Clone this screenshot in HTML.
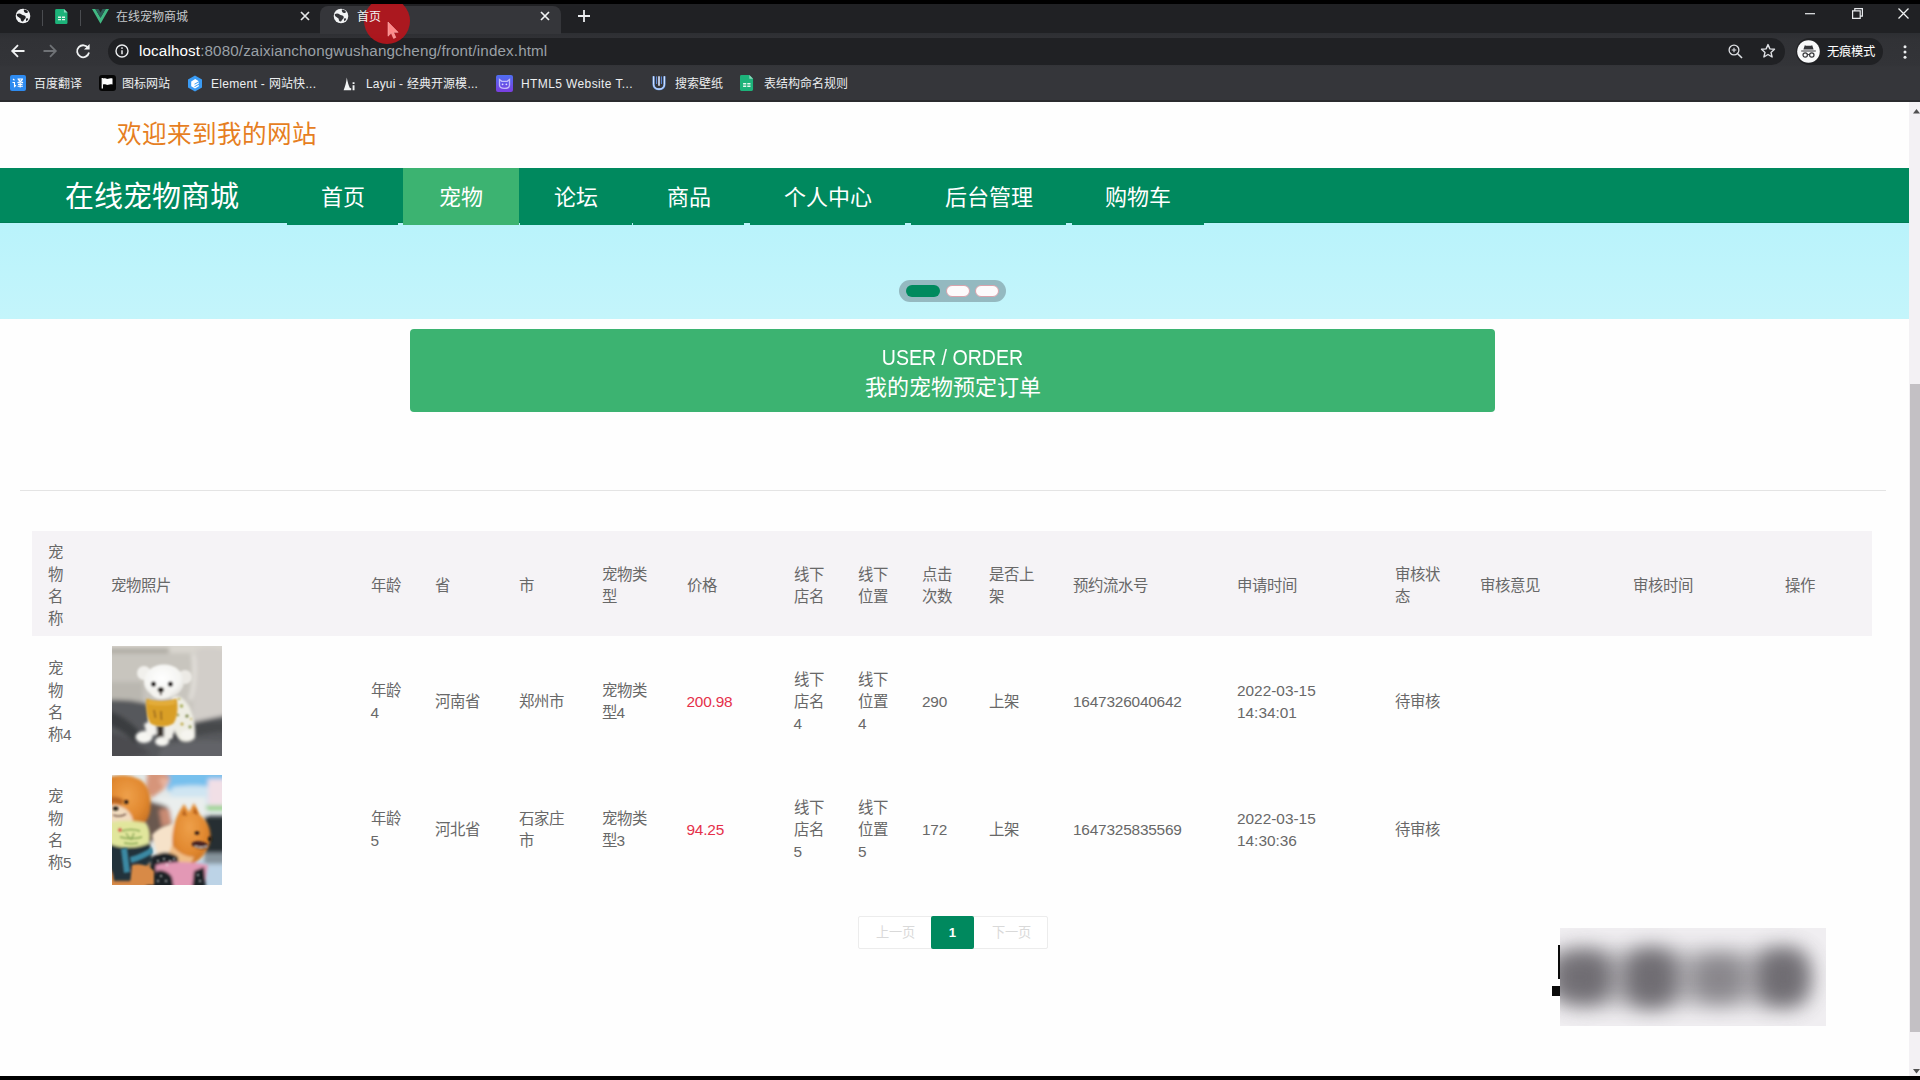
<!DOCTYPE html>
<html lang="zh-CN">
<head>
<meta charset="utf-8">
<title>首页</title>
<style>
*{margin:0;padding:0;box-sizing:border-box}
html,body{width:1920px;height:1080px;overflow:hidden;background:#000;font-family:"Liberation Sans",sans-serif}
.a{position:absolute}
svg{display:block;position:absolute;overflow:visible}
/* ---------- browser chrome ---------- */
#tabstrip{left:0;top:4px;width:1920px;height:30px;background:#202124}
#toolbar{left:0;top:33px;width:1920px;height:68px;background:linear-gradient(#2d2f33 0,#313236 6px,#333438 32px,#35363a 34px)}
#chromeline{left:0;top:100px;width:1920px;height:2px;background:#2a2b2e}
.tabtxt{top:10.300px;font-size:12px;line-height:15px;white-space:nowrap}
#acttab{left:320px;top:6px;width:241px;height:28px;background:#35363a;border-radius:8px 8px 0 0}
#omni{left:108px;top:38px;width:1677px;height:27px;border-radius:14px;background:#202124}
#url{left:139px;top:42px;font-size:15.200px;line-height:18px;color:#9aa0a6;white-space:nowrap;letter-spacing:.13px}
#url b{font-weight:normal;color:#fff}
#incog{left:1796px;top:38px;width:87px;height:27px;border-radius:14px;background:#202124}
.bm{top:76.800px;font-size:12px;line-height:15px;color:#eceef0;white-space:nowrap}
/* ---------- page ---------- */
#page{left:0;top:102px;width:1909px;height:974px;background:#fefefe;overflow:hidden}
#welcome{left:117px;top:18.300px;font-size:24.600px;line-height:30px;color:#e67e22;white-space:nowrap}
#nav{left:0;top:66.200px;width:1909px;height:54.400px;background:#00895e;box-shadow:inset 0 -1px 0 #007d55}
#brand{left:65px;top:77px;font-size:29px;line-height:36px;color:#fff;white-space:nowrap}
.ni{top:66.200px;height:56.500px;background:#00895e;color:#fff;font-size:22px;line-height:59.600px;text-align:center;white-space:nowrap}
.ni.on{background:#3cb371}
#carousel{left:0;top:121px;width:1909px;height:96px;background:linear-gradient(#b9f3fb,#c4f5fb)}
#indic{left:899px;top:178.200px;width:107px;height:22px;border-radius:11px;background:rgba(70,80,90,.36)}
#banner{left:410px;top:227.400px;width:1085px;height:82.500px;border-radius:4px;background:#3cb371;color:#fff;text-align:center;white-space:nowrap}
#banner div{left:0;width:1085px;font-size:22px;line-height:30px}
#hr{left:20px;top:388px;width:1866px;height:1px;background:#e4e4e4}
#thead{left:32px;top:429px;width:1840px;height:104.600px;background:#f5f3f6}
.c{font-size:15.400px;line-height:22px;color:#686868;white-space:nowrap;transform:translateY(-50%)}
.c.r{color:#e5304a}
.n{letter-spacing:-.2px}
#pager{left:858px;top:814px;width:190px;height:33px;border:1px solid #ececec;border-radius:2px;background:#fff}
#pager .pt{top:8px;font-size:13.200px;line-height:15px;color:#d9d9d9;white-space:nowrap}
#pcur{left:931px;top:814px;width:43px;height:33px;border-radius:2px;background:#00895e;color:#fff;font-size:13.200px;font-weight:bold;line-height:33.500px;text-align:center}
#wm{left:1560px;top:826px;width:266px;height:98px;background:#f0eef1;overflow:hidden}
#wm i{position:absolute;display:block;background:#615e64;border-radius:36%;filter:blur(10px);opacity:.8}
#sb{left:1909px;top:102px;width:11px;height:974px;background:#f3f1f4}
#sbthumb{left:1910px;top:384px;width:10px;height:648px;background:#c3c0c4}
</style>
</head>
<body>
<!-- ======== browser chrome ======== -->
<div class="a" id="tabstrip"></div>
<div class="a" id="toolbar"></div>
<div class="a" id="chromeline"></div>
<div class="a" id="acttab"></div>
<!-- pinned tab 1 : globe -->
<svg style="left:15px;top:8px" width="16" height="16" viewBox="0 0 16 16"><circle cx="8" cy="8" r="7.3" fill="#f1f3f4"/><path d="M1.700 6.300c1.800-1.300 3.700-1 5 .3 1 1 2.500.5 3.500 1.400 1 .9.600 2.500-.500 3.200-.9.600-1 2-2.100 2.300-1.100.3-1.800-.9-1.800-1.900 0-1-.9-1.400-1.700-2-.9-.7-2.200-1-2.400-3.300zM9 1.600c1.400-.1 3 .8 3.800 2 .5.800-.3 1.500-1.200 1.400-.9-.1-1.800-.4-2.300-1.100-.4-.6-.7-1.500-.3-2.300zM11.300 10.600c.8-.5 1.700-.3 2 .3-.4 1-1 1.800-1.800 2.400-.6-.8-.8-2.100-.2-2.700z" fill="#202124"/></svg>
<div class="a" style="left:42px;top:10px;width:1px;height:16px;background:#4a4c50"></div>
<!-- pinned tab 2 : sheet -->
<svg style="left:54.500px;top:8.500px" width="13.500" height="15" viewBox="0 0 15 17"><path d="M1.5 0h8.500l4 4v11.500a1.500 1.500 0 0 1-1.500 1.500h-11a1.500 1.500 0 0 1-1.500-1.500v-14a1.500 1.500 0 0 1 1.500-1.500z" fill="#1db37a"/><path d="M10 0l4 4h-4z" fill="#8ed9bd"/><path d="M3.300 8.500h3.400v1.600h-3.400zM7.800 8.500h3.400v1.600h-3.400zM3.300 11.200h3.400v1.600h-3.400zM7.800 11.200h3.400v1.600h-3.400z" fill="#e7f6ee"/></svg>
<div class="a" style="left:80px;top:10px;width:1px;height:16px;background:#4a4c50"></div>
<!-- tab 3 : vue -->
<svg style="left:92px;top:9px" width="17" height="15" viewBox="0 0 17 15"><path d="M0 0h3.400l5.100 8.800 5.100-8.800h3.400l-8.500 14.700z" fill="#41b883"/><path d="M3.400 0h3.100l2 3.500 2-3.500h3.100l-5.100 8.800z" fill="#2c5a55"/></svg>
<div class="a tabtxt" style="left:116px;color:#c6c9cc">在线宠物商城</div>
<svg style="left:300px;top:11px" width="10" height="10" viewBox="0 0 10 10"><path d="M1 1l8 8M9 1l-8 8" stroke="#e4e6e8" stroke-width="1.700" fill="none"/></svg>
<!-- active tab -->
<svg style="left:333px;top:8px" width="16" height="16" viewBox="0 0 16 16"><circle cx="8" cy="8" r="7.300" fill="#f1f3f4"/><path d="M1.700 6.300c1.800-1.300 3.700-1 5 .3 1 1 2.500.5 3.500 1.400 1 .9.600 2.500-.500 3.200-.9.600-1 2-2.100 2.300-1.100.3-1.800-.9-1.800-1.900 0-1-.9-1.400-1.700-2-.9-.7-2.200-1-2.400-3.300zM9 1.600c1.400-.1 3 .8 3.800 2 .5.800-.3 1.500-1.200 1.400-.9-.1-1.800-.4-2.300-1.100-.4-.6-.7-1.500-.3-2.300zM11.300 10.600c.8-.5 1.700-.3 2 .3-.4 1-1 1.800-1.800 2.400-.6-.8-.8-2.100-.2-2.700z" fill="#35363a"/></svg>
<svg style="left:540px;top:11px" width="10" height="10" viewBox="0 0 10 10"><path d="M1 1l8 8M9 1l-8 8" stroke="#f1f3f4" stroke-width="1.700" fill="none"/></svg>
<!-- new tab + -->
<svg style="left:578px;top:10px" width="12" height="12" viewBox="0 0 12 12"><path d="M6 0v12M0 6h12" stroke="#eceef0" stroke-width="1.800" fill="none"/></svg>
<!-- window controls -->
<svg style="left:1805px;top:13px" width="10" height="2" viewBox="0 0 10 2"><path d="M0 .7h10" stroke="#e8eaed" stroke-width="1.200"/></svg>
<svg style="left:1852px;top:8px" width="11" height="11" viewBox="0 0 11 11"><path d="M.6 2.800h7.600v7.600h-7.600zM2.800 2.800v-2.200h7.600v7.600h-2.200" stroke="#e8eaed" stroke-width="1.200" fill="none"/></svg>
<svg style="left:1898px;top:8px" width="11" height="11" viewBox="0 0 11 11"><path d="M.5.5l10 10M10.500.5l-10 10" stroke="#f1f3f4" stroke-width="1.300" fill="none"/></svg>
<!-- toolbar buttons -->
<svg style="left:11px;top:44px" width="14" height="14" viewBox="0 0 14 14"><path d="M13.500 7h-12M7 1.200l-5.800 5.800 5.800 5.800" stroke="#f1f3f4" stroke-width="1.800" fill="none"/></svg>
<svg style="left:43px;top:44px" width="14" height="14" viewBox="0 0 14 14"><path d="M.5 7h12M7 1.200l5.800 5.800-5.800 5.800" stroke="#6f7276" stroke-width="1.800" fill="none"/></svg>
<svg style="left:75px;top:43px" width="16" height="16" viewBox="0 0 16 16"><path d="M13.300 5.200a6 6 0 1 0 .7 4.300" stroke="#f1f3f4" stroke-width="1.800" fill="none"/><path d="M14.600 1v5.600h-5.600z" fill="#f1f3f4"/></svg>
<div class="a" id="omni"></div>
<svg style="left:115px;top:44px" width="14" height="14" viewBox="0 0 14 14"><circle cx="7" cy="7" r="6" stroke="#eceef0" stroke-width="1.400" fill="none"/><path d="M7 6.200v4" stroke="#eceef0" stroke-width="1.500"/><circle cx="7" cy="4.100" r=".9" fill="#eceef0"/></svg>
<div class="a" id="url"><b>localhost</b>:8080/zaixianchongwushangcheng/front/index.html</div>
<svg style="left:1728px;top:44px" width="15" height="15" viewBox="0 0 15 15"><circle cx="6" cy="6" r="4.900" stroke="#dfe1e5" stroke-width="1.300" fill="none"/><path d="M9.700 9.700l4.300 4.300" stroke="#dfe1e5" stroke-width="1.600"/><path d="M6 3.700v4.600M3.700 6h4.600" stroke="#dfe1e5" stroke-width="1.100"/></svg>
<svg style="left:1760px;top:43px" width="16" height="16" viewBox="0 0 16 16"><path d="M8 1.600l1.900 4.300 4.600.4-3.500 3.100 1.100 4.600-4.100-2.500-4.100 2.500 1.100-4.600-3.500-3.100 4.600-.4z" stroke="#dfe1e5" stroke-width="1.400" fill="none" stroke-linejoin="round"/></svg>
<div class="a" id="incog"></div>
<svg style="left:1797px;top:40px" width="23" height="23" viewBox="0 0 23 23"><circle cx="11.500" cy="11.500" r="11.300" fill="#f8f9fa"/><path d="M7.800 5.200l1.300.6h4.800l1.300-.6 1.400 4.200h-10.200z" fill="#35363a"/><path d="M4.200 10.400h14.600v1.200h-14.600z" fill="#35363a"/><circle cx="8.200" cy="15" r="2.200" stroke="#35363a" stroke-width="1.200" fill="none"/><circle cx="14.800" cy="15" r="2.200" stroke="#35363a" stroke-width="1.200" fill="none"/><path d="M10.300 14.600h2.400" stroke="#35363a" stroke-width="1"/></svg>
<div class="a" style="left:1827px;top:45.300px;font-size:12.300px;line-height:15px;color:#fff;white-space:nowrap">无痕模式</div>
<svg style="left:1903px;top:45px" width="4" height="14" viewBox="0 0 4 14"><circle cx="2" cy="1.700" r="1.500" fill="#eceef0"/><circle cx="2" cy="7" r="1.500" fill="#eceef0"/><circle cx="2" cy="12.300" r="1.500" fill="#eceef0"/></svg>
<!-- bookmarks bar -->
<svg style="left:10px;top:75px" width="16" height="16" viewBox="0 0 16 16"><rect width="16" height="16" rx="2" fill="#2e8bf0"/><path d="M3 4l1.500 1.200M2.500 7.500h2v4l1.500-1.200M7.500 4h5.500M8.300 4c.8 2 2.600 3.200 4.800 3.600M12.500 4c-.8 2-2.600 3.200-5 3.600M10.200 7.600v5M8 9.400h4.500M7.600 11.300h5.300" stroke="#fff" stroke-width="1.100" fill="none"/></svg>
<div class="a bm" style="left:34px">百度翻译</div>
<svg style="left:99px;top:75px" width="17" height="16" viewBox="0 0 17 16"><rect width="17" height="16" rx="3" fill="#060606"/><path d="M3.300 3v10.500" stroke="#fff" stroke-width="1.300"/><path d="M4 3.600c2-1.200 3.500.9 5.200.2 1.300-.5 2.600-1.100 4.300-.2v6c-1.700-.9-3-.3-4.300.2-1.700.7-3.200-1.400-5.200-.2z" fill="#fff"/></svg>
<div class="a bm" style="left:122px">图标网站</div>
<svg style="left:187px;top:75px" width="16" height="17" viewBox="0 0 16 17"><path d="M8 .4l7 4v8.200l-7 4-7-4v-8.200z" fill="#3a9bf4"/><path d="M4.200 6.400l4-2.300 3.600 2.100-4.300 2.500v1.100l4.300-2.500v1.400l-4.300 2.500v1.100l4.300-2.500v1.500l-3.800 2.200-3.800-2.200z" fill="#fff"/></svg>
<div class="a bm" style="left:211px;letter-spacing:.29px">Element - 网站快...</div>
<svg style="left:343px;top:76.500px" width="14" height="14" viewBox="0 0 14 14"><path d="M.6 13.200c1.600-3.600 2.700-7.800 3.200-12.600.7 4.200 1.700 7.600 3.100 10.400l1.300.2v2z" fill="#f1f3f4"/><path d="M9.600 13.200v-5h1.900v5zM9.600 5.300h1.900v1.700h-1.900z" fill="#f1f3f4"/></svg>
<div class="a bm" style="left:366px;letter-spacing:.17px">Layui - 经典开源模...</div>
<svg style="left:496px;top:75px" width="17" height="17" viewBox="0 0 17 17"><defs><linearGradient id="hg5" x1="0" y1="0" x2="0" y2="1"><stop offset="0" stop-color="#4f6ef2"/><stop offset="1" stop-color="#7a3ee0"/></linearGradient></defs><rect width="17" height="17" rx="2" fill="url(#hg5)"/><path d="M3.500 4.500l2.300 1.800h5.400l2.300-1.800v5.800c0 1.700-2.100 3-5 3s-5-1.300-5-3z" fill="none" stroke="#c3bcfb" stroke-width="1.300"/><circle cx="6.600" cy="9.300" r=".9" fill="#e2deff"/><circle cx="10.400" cy="9.300" r=".9" fill="#e2deff"/></svg>
<div class="a bm" style="left:521px;letter-spacing:.39px">HTML5 Website T...</div>
<svg style="left:651px;top:75px" width="16" height="16" viewBox="0 0 16 16"><path d="M2.600 1.200v8.200c0 2.800 2.200 4.800 5.400 4.800s5.400-2 5.400-4.800v-8.200" stroke="#6ea0ee" stroke-width="2.200" fill="none"/><path d="M2.600 1.200v8.200c0 2.800 2.200 4.800 5.400 4.800s5.400-2 5.400-4.800v-8.200" stroke="#e6efff" stroke-width=".9" fill="none"/><path d="M8 1.200v9.600" stroke="#dfe9ff" stroke-width="1.600"/><path d="M5.600 1.400v7.600M10.400 1.400v7.600" stroke="#5f8fe6" stroke-width="1"/></svg>
<div class="a bm" style="left:675px">搜索壁纸</div>
<svg style="left:740px;top:75px" width="14" height="16" viewBox="0 0 15 17"><path d="M1.500 0h8.500l4 4v11.500a1.500 1.500 0 0 1-1.500 1.500h-11a1.500 1.500 0 0 1-1.500-1.500v-14a1.500 1.500 0 0 1 1.500-1.500z" fill="#1db37a"/><path d="M10 0l4 4h-4z" fill="#8ed9bd"/><path d="M3.300 8.500h3.400v1.600h-3.400zM7.800 8.500h3.400v1.600h-3.400zM3.300 11.200h3.400v1.600h-3.400zM7.800 11.200h3.400v1.600h-3.400z" fill="#e7f6ee"/></svg>
<div class="a bm" style="left:764px">表结构命名规则</div>

<!-- click indicator + cursor -->
<div class="a" style="left:364px;top:4px;width:46px;height:40px;overflow:hidden"><div class="a" style="left:0;top:-6px;width:46px;height:46px;border-radius:50%;background:#b5151d;opacity:.93"></div></div>
<svg style="left:388px;top:22px" width="12" height="18" viewBox="0 0 12 18"><path d="M0 0v14.200l3.300-3.100 2.300 5.300 2.200-1-2.300-5.100h4.600z" fill="#ff8a8a" stroke="#f6b0b0" stroke-width=".6"/></svg>
<div class="a tabtxt" style="left:357px;color:#f1f3f4">首页</div>

<!-- ======== page ======== -->
<div class="a" id="page">
  <div class="a" id="welcome">欢迎来到我的网站</div>
  <div class="a" id="carousel"></div>
  <div class="a" id="nav"></div>
  <div class="a" id="brand">在线宠物商城</div>
  <div class="a ni" style="left:287px;width:111px">首页</div>
  <div class="a ni on" style="left:403px;width:116px">宠物</div>
  <div class="a ni" style="left:520px;width:112px">论坛</div>
  <div class="a ni" style="left:633px;width:111px">商品</div>
  <div class="a ni" style="left:750px;width:155px">个人中心</div>
  <div class="a ni" style="left:911px;width:155px">后台管理</div>
  <div class="a ni" style="left:1072px;width:132px">购物车</div>
  <div class="a" id="indic"></div>
  <div class="a" style="left:906px;top:182.700px;width:34px;height:12px;border-radius:6px;background:#008a5e"></div>
  <div class="a" style="left:946px;top:182.700px;width:23.500px;height:12px;border-radius:6px;background:#fdfbfc;border:1px solid #d9a3ac"></div>
  <div class="a" style="left:975px;top:182.700px;width:23.500px;height:12px;border-radius:6px;background:#fdfbfc;border:1px solid #d9a3ac"></div>
  <div class="a" id="banner"><div class="a" style="top:13.200px;transform:scaleX(.89)">USER / ORDER</div><div class="a" style="top:43.300px">我的宠物预定订单</div></div>
  <div class="a" id="hr"></div>
  <div class="a" id="thead"></div>
  <div class="a c" style="left:48px;top:483.500px">宠<br>物<br>名<br>称</div>
  <div class="a c" style="left:111px;top:483.500px">宠物照片</div>
  <div class="a c" style="left:370.5px;top:483.500px">年龄</div>
  <div class="a c" style="left:435px;top:483.500px">省</div>
  <div class="a c" style="left:518.5px;top:483.500px">市</div>
  <div class="a c" style="left:601.5px;top:483.500px">宠物类<br>型</div>
  <div class="a c" style="left:686.5px;top:483.500px">价格</div>
  <div class="a c" style="left:793.5px;top:483.500px">线下<br>店名</div>
  <div class="a c" style="left:858px;top:483.500px">线下<br>位置</div>
  <div class="a c" style="left:922px;top:483.500px">点击<br>次数</div>
  <div class="a c" style="left:988.5px;top:483.500px">是否上<br>架</div>
  <div class="a c" style="left:1073px;top:483.500px">预约流水号</div>
  <div class="a c" style="left:1237px;top:483.500px">申请时间</div>
  <div class="a c" style="left:1395px;top:483.500px">审核状<br>态</div>
  <div class="a c" style="left:1479.5px;top:483.500px">审核意见</div>
  <div class="a c" style="left:1632.5px;top:483.500px">审核时间</div>
  <div class="a c" style="left:1784.5px;top:483.500px">操作</div>
  <div class="a c" style="left:48px;top:600px">宠<br>物<br>名<br>称4</div>
  <div class="a c" style="left:370.5px;top:600px">年龄<br>4</div>
  <div class="a c" style="left:435px;top:600px">河南省</div>
  <div class="a c" style="left:518.5px;top:600px">郑州市</div>
  <div class="a c" style="left:601.5px;top:600px">宠物类<br>型4</div>
  <div class="a c r n" style="left:686.5px;top:600px">200.98</div>
  <div class="a c" style="left:793.5px;top:600px">线下<br>店名<br>4</div>
  <div class="a c" style="left:858px;top:600px">线下<br>位置<br>4</div>
  <div class="a c n" style="left:922px;top:600px">290</div>
  <div class="a c" style="left:988.5px;top:600px">上架</div>
  <div class="a c n" style="left:1073px;top:600px">1647326040642</div>
  <div class="a c" style="left:1237px;top:600px">2022-03-15<br>14:34:01</div>
  <div class="a c" style="left:1395px;top:600px">待审核</div>
  <div class="a c" style="left:48px;top:728.250px">宠<br>物<br>名<br>称5</div>
  <div class="a c" style="left:370.5px;top:728.250px">年龄<br>5</div>
  <div class="a c" style="left:435px;top:728.250px">河北省</div>
  <div class="a c" style="left:518.5px;top:728.250px">石家庄<br>市</div>
  <div class="a c" style="left:601.5px;top:728.250px">宠物类<br>型3</div>
  <div class="a c r n" style="left:686.5px;top:728.250px">94.25</div>
  <div class="a c" style="left:793.5px;top:728.250px">线下<br>店名<br>5</div>
  <div class="a c" style="left:858px;top:728.250px">线下<br>位置<br>5</div>
  <div class="a c n" style="left:922px;top:728.250px">172</div>
  <div class="a c" style="left:988.5px;top:728.250px">上架</div>
  <div class="a c n" style="left:1073px;top:728.250px">1647325835569</div>
  <div class="a c" style="left:1237px;top:728.250px">2022-03-15<br>14:30:36</div>
  <div class="a c" style="left:1395px;top:728.250px">待审核</div>
<svg id="dog1" style="left:112px;top:544.300px" width="110" height="110" viewBox="0 0 110 110">
<defs><filter id="b1" x="-10%" y="-10%" width="120%" height="120%"><feGaussianBlur stdDeviation="1"/></filter><filter id="b2" x="-10%" y="-10%" width="120%" height="120%"><feGaussianBlur stdDeviation="2.200"/></filter><filter id="b3" x="-10%" y="-10%" width="120%" height="120%"><feGaussianBlur stdDeviation="1.500"/></filter><clipPath id="cp1"><rect width="110" height="110"/></clipPath>
<radialGradient id="hg" cx=".45" cy=".4" r=".65"><stop offset="0" stop-color="#ffffff"/><stop offset=".7" stop-color="#f4f4f1"/><stop offset="1" stop-color="#dcdad4"/></radialGradient></defs>
<g clip-path="url(#cp1)">
<rect width="110" height="110" fill="#c8c5be"/>
<g filter="url(#b2)">
<rect x="-5" y="-5" width="120" height="12" fill="#d9d6cf"/>
<rect x="-5" y="2" width="62" height="5" fill="#aeaba3"/>
<path d="M84 4c8-3 20-2 30 0v70l-34 4z" fill="#d2cec9"/>
<path d="M81 8c2 10 2 30-3 46" stroke="#e6e3de" stroke-width="3.500" fill="none"/>
<path d="M-5 36h36v22h-36z" fill="#bab7b0"/>
<path d="M-5 54c12-1 26 0 38 3l12 14 36 5 34-7v52h-120z" fill="#57585c"/>
<path d="M-5 64c12 4 26 12 36 26l-8 8c-8-10-18-16-28-20z" fill="#3b3c40"/>
<path d="M-5 86c14 2 30 10 44 22l-44 8z" fill="#4b4c50"/>
<path d="M50 101c18-6 40-8 64-6v20h-70z" fill="#626367"/>
<path d="M80 79c10-3 22-4 34-3v10c-12 0-24 2-34 5z" fill="#47484c"/>
<path d="M58 84c8-2 18-2 26 2l-4 8c-8 0-16 0-24-2z" fill="#3a3a3e"/>
</g>
<g filter="url(#b3)">
<path d="M60 50c8-1 14 4 18 12 4 9 6 20 5 30-3 4-9 5-14 3-4-3-7-9-8-16z" fill="#eeede3"/>
<ellipse cx="75.500" cy="89" rx="7" ry="5" fill="#f5f4ef"/>
<path d="M36 58h26v30h-26z" fill="#f0efe9"/>
<path d="M44.500 79h8v17h-8z" fill="#38322f"/>
<ellipse cx="32" cy="91" rx="8.500" ry="6" fill="#f6f6f2"/>
<path d="M32 78l11-5 2 15-9 4z" fill="#f3f2ee"/>
<ellipse cx="50" cy="95.500" rx="7" ry="4.500" fill="#f5f5f1"/>
<path d="M52 77l9 0 0 15-9 4z" fill="#efeee8"/>
</g>
<g filter="url(#b1)">
<circle cx="69.500" cy="60" r="1.700" fill="#a3aa4e"/><circle cx="75" cy="70" r="1.600" fill="#6d7a3a"/><circle cx="70" cy="78" r="1.500" fill="#b9a33c"/><circle cx="78" cy="81" r="1.400" fill="#7d8a40"/><circle cx="67" cy="53" r="1.200" fill="#c2b45a"/><circle cx="66" cy="69" r="1.200" fill="#8b9445"/><circle cx="79" cy="73" r="1.100" fill="#c9b658"/>
<path d="M34.500 52.500c8 3 21 3 30 0 2 8 1 19-3 25-6 4-17 4-23 0-4-6-5-17-4-25z" fill="#d99f28"/>
<path d="M36 54c8 2 19 2 27 0l0 4c-8 2-19 2-27 0z" fill="#e4ad3a"/>
<path d="M42 64l1.500 8M49 65l.5 9" stroke="#86571b" stroke-width="1.300"/>
<circle cx="32" cy="27" r="7" fill="#f1f0ec"/><circle cx="73" cy="31" r="7" fill="#eceae5"/>
<ellipse cx="52" cy="35.500" rx="20" ry="17" fill="url(#hg)"/>
<ellipse cx="49" cy="46.500" rx="10" ry="6.500" fill="#f4f3ef"/>
<circle cx="41.500" cy="38" r="2.600" fill="#15110d"/><circle cx="58.400" cy="38" r="2.600" fill="#15110d"/>
<ellipse cx="48.800" cy="43.800" rx="3.100" ry="2.600" fill="#1a1511"/><path d="M48.800 46v3.200" stroke="#4a3a34" stroke-width="1.800"/>
</g>
</g></svg>
<svg id="dog2" style="left:112px;top:672.500px" width="110" height="110" viewBox="0 0 110 110">
<defs><clipPath id="cp2"><rect width="110" height="110"/></clipPath>
<radialGradient id="og1" cx=".45" cy=".4" r=".7"><stop offset="0" stop-color="#eea04a"/><stop offset=".6" stop-color="#e1882f"/><stop offset="1" stop-color="#c26e22"/></radialGradient></defs>
<g clip-path="url(#cp2)">
<rect width="110" height="110" fill="#e2e8e8"/>
<g filter="url(#b2)">
<path d="M52 -4h64v20c-20 0-40 2-60 0z" fill="#77c0ed"/>
<path d="M60 12c14-2 30-2 40 0v18h-44z" fill="#cfe5f2"/>
<path d="M96 4h18v26h-18z" fill="#f1dfe6"/>
<path d="M86 31h28v3.500h-28z" fill="#7acb66"/>
<path d="M44 22h50v20h-50z" fill="#eaeeed"/>
<path d="M92 41h22v37h-22z" fill="#282d31"/>
<path d="M84 86c10-4 20-2 30 2v26h-32z" fill="#bcd3e6"/>
<path d="M92 78h22v11h-22z" fill="#87949d"/>
<path d="M36 -4c8 0 16 0 21 4 2 6-2 12-8 16l-9 7-7-6z" fill="#d6957a"/>
<path d="M47 4c4-2 9-1 11 2l-6 8z" fill="#e9b49e"/>
<path d="M30 28c8-2 18 0 26 4l4 24-24 12-8-10z" fill="#6b5850"/>
<path d="M47 35c4-2 8-2 11 0l2 14-10 3z" fill="#c98b73"/>
<path d="M-4 84c14-2 30 0 44 4v26h-44z" fill="#d88a46"/>
</g>
<g filter="url(#b3)">
<path d="M-4 3c8-4 24-4 34 3 8 7 10 19 8 31-2 10-8 15-16 15h-26z" fill="url(#og1)"/>
<path d="M-4 31c7-2 14 0 19 4 5 5 7 10 5 15h-24z" fill="#f2dcc0"/>
<path d="M-4 22c6-1 12 0 16 3l-2 5c-5-2-10-2-14-1z" fill="#b96520"/>
<path d="M-4 48c10-3 24-3 38 0 4 6 5 14 2 22-10 6-26 6-40 2z" fill="#e1e69c"/>
<path d="M-4 68c12 6 28 6 42 0l2 18c-6 4-10 10-12 20h-32z" fill="#21333a"/>
<path d="M40 60c8-9 20-13 32-11l6 33c-10 4-22 4-32 0z" fill="#f6e2c9"/>
<path d="M67 37l5-8 5 8 5-9 6 12c8 6 12 16 10 26-2 10-8 18-16 22-8 2-16-2-20-10-4-12-1-30 5-41z" fill="url(#og1)"/>
<path d="M60 70c6 8 14 12 22 12l-4 8c-8 0-16-4-22-10z" fill="#f0bd86"/>
<path d="M40 82c8-6 18-6 26 0l2 30h-34z" fill="#1b2125"/>
<path d="M44 90c14-4 34-4 52 0l-4 24h-50z" fill="#e398b5"/>
<path d="M44 96c6-2 12 0 16 6l2 12h-22z" fill="#1b2125"/>
<path d="M82 96l10-4 2 22h-14z" fill="#1b2125"/>
</g>
<g filter="url(#b1)">
<circle cx="14.300" cy="27" r="2.100" fill="#24150e"/><ellipse cx="3.600" cy="33.500" rx="2.800" ry="2.100" fill="#1c120e"/>
<path d="M1 40c4 1.500 9 1.500 13-1" stroke="#5e4034" stroke-width="1.300" fill="none"/>
<path d="M10 56c6-2 12-2 18 0M8 62c8 2 16 2 22 0M12 68c5 1 10 1 14 0" stroke="#86a653" stroke-width="1.400" fill="none"/>
<path d="M14 58l4 6M22 58l-3 7" stroke="#7c9c4c" stroke-width="1.100" fill="none"/>
<circle cx="8" cy="55" r="1.700" fill="#d63a3a"/>
<path d="M9 74l6-1 3 24-6 1z" fill="#3a88a2"/><path d="M18 82c8-2 16-6 22-10l1 6c-6 4-14 8-22 10z" fill="#3a88a2"/>
<path d="M-4 92c4 2 6 8 6 18h-6zM20 90c8-2 16 0 22 6v14h-24z" fill="#d88a46"/>
<ellipse cx="88" cy="70" rx="8.500" ry="3.800" fill="#472424" transform="rotate(8 88 70)"/>
<path d="M82.500 71c4 1.600 9 1.600 13 0" stroke="#eadfd6" stroke-width="1.300" fill="none"/>
<ellipse cx="85" cy="58" rx="2.500" ry="1.700" fill="#26170e"/><ellipse cx="98" cy="64" rx="2.100" ry="2.500" fill="#271a12"/>
<path d="M70 40l2-6 3 7z" fill="#b8631f"/><path d="M81 38l2-6 3 8z" fill="#b8631f"/>
<g fill="#e8ecec"><circle cx="46" cy="86" r=".9"/><circle cx="52" cy="84" r=".9"/><circle cx="58" cy="86" r=".9"/><circle cx="49" cy="101" r=".9"/><circle cx="54" cy="106" r=".9"/><circle cx="46" cy="106" r=".9"/><circle cx="86" cy="100" r=".9"/><circle cx="88" cy="106" r=".9"/><circle cx="62" cy="84" r=".9"/><circle cx="55" cy="90" r=".9"/></g>
</g>
</g></svg>
  <div class="a" id="pager"><div class="a pt" style="left:17px">上一页</div><div class="a pt" style="left:133px">下一页</div></div>
  <div class="a" id="pcur">1</div>
  <div class="a" style="left:1557.500px;top:843px;width:2.500px;height:34px;background:#0a0a0a"></div>
  <div class="a" style="left:1552px;top:884px;width:8px;height:10px;background:#0a0a0a"></div>
  <div class="a" id="wm"><i style="left:4px;top:24px;width:246px;height:52px;background:#9a989d;border-radius:20px;filter:blur(11px)"></i><i style="left:-12px;top:22px;width:62px;height:54px"></i><i style="left:66px;top:20px;width:50px;height:60px"></i><i style="left:136px;top:26px;width:46px;height:50px;opacity:.45"></i><i style="left:198px;top:20px;width:50px;height:58px"></i></div>
</div>
<div class="a" id="sb"></div>
<div class="a" id="sbthumb"></div>
<svg style="left:1913px;top:108.500px" width="7" height="4.500" viewBox="0 0 8 5"><path d="M0 5l4-5 4 5z" fill="#505050"/></svg>
<svg style="left:1913px;top:1068.500px" width="7" height="4.500" viewBox="0 0 8 5"><path d="M0 0l4 5 4-5z" fill="#505050"/></svg>
</body>
</html>
